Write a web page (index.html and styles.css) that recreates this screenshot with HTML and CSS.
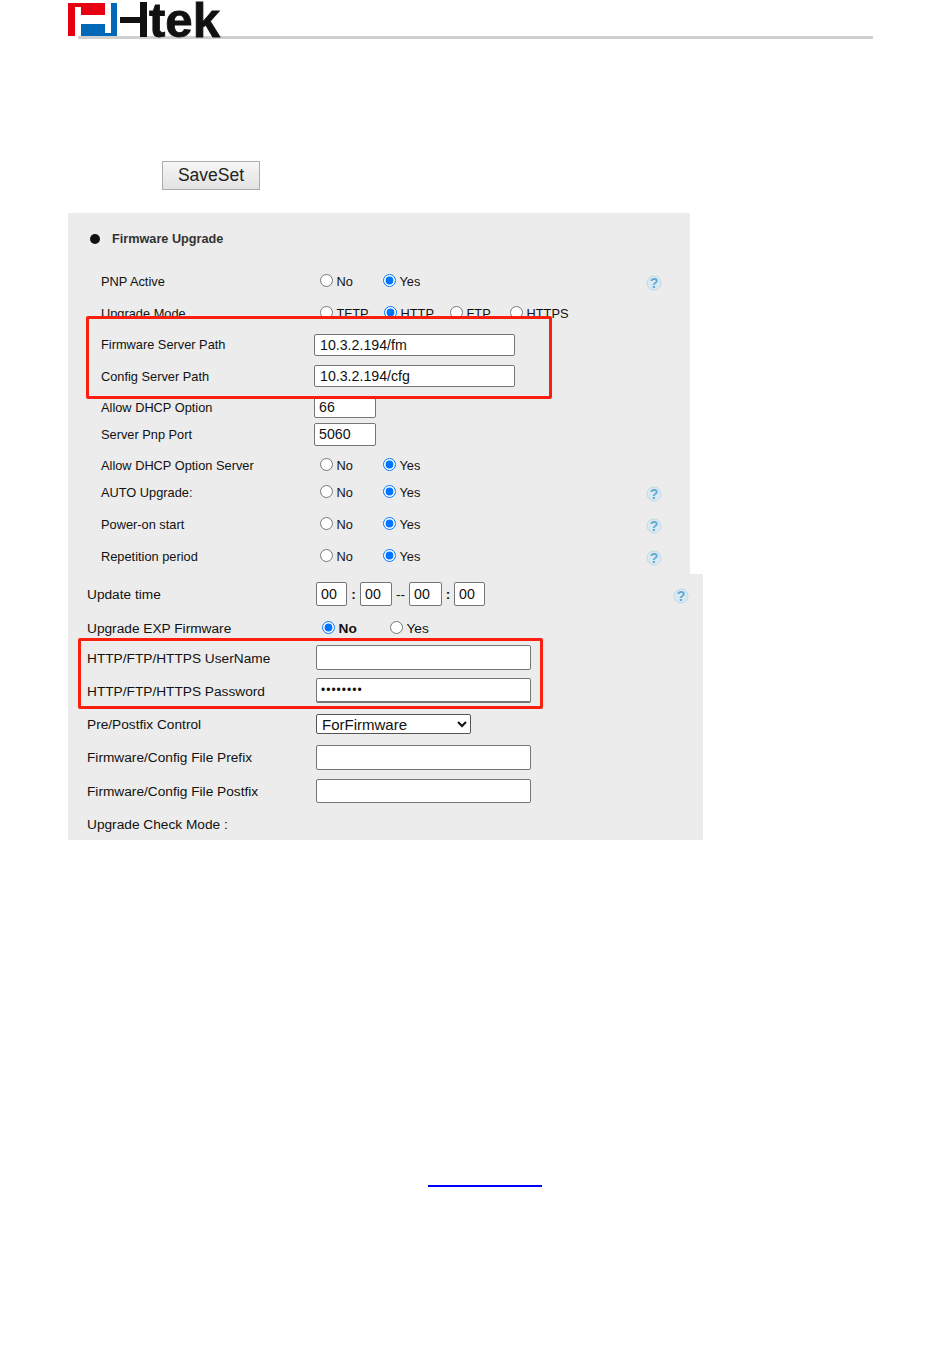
FILE: index.html
```html
<!DOCTYPE html>
<html lang="en">
<head>
<meta charset="utf-8">
<title>Firmware Upgrade</title>
<link rel="stylesheet" href="styles.css">
</head>
<body>
<header class="hdr">
  <svg class="logo" width="156" height="38" viewBox="0 0 156 38">
    <path fill="#e60012" d="M0 3H37V15H13V7H7V36H0Z"/>
    <path fill="#0068b7" d="M13 24H37V33H43V3H49V36H13Z"/>
    <path fill="#111" d="M52 17H72V2H79V37H72V23H52Z"/>
    <text class="logo-text" x="81" y="36.5" textLength="71" lengthAdjust="spacingAndGlyphs">tek</text>
  </svg>
</header>
<button class="save" type="button">SaveSet</button>

<section class="panel p1">
  <div class="head"><span class="dot"></span><span>Firmware Upgrade</span></div>
  <div class="row g19"><label>PNP Active</label><div class="ctl"><span class="opt w63"><input type="radio" name="a"><span>No</span></span><span class="opt"><input type="radio" name="a" checked><span>Yes</span></span></div><svg class="help" viewBox="0 0 16 16"><circle cx="8" cy="8" r="7" fill="#dbe9f1" stroke="#bcd9ea"/><text class="q-text" x="8" y="13" text-anchor="middle">?</text></svg></div>
  <div class="row g8"><label>Upgrade Mode</label><div class="ctl"><span class="opt w64"><input type="radio" name="b"><span>TFTP</span></span><span class="opt w66"><input type="radio" name="b" checked><span>HTTP</span></span><span class="opt w60"><input type="radio" name="b"><span>FTP</span></span><span class="opt"><input type="radio" name="b"><span>HTTPS</span></span></div></div>
  <div class="mark m1">
    <div class="row"><label>Firmware Server Path</label><div class="ctl"><input class="txt t200 down" type="text" value="10.3.2.194/fm"></div></div>
    <div class="row g8"><label>Config Server Path</label><div class="ctl"><input class="txt t200" type="text" value="10.3.2.194/cfg"></div></div>
  </div>
  <div class="row after1"><label>Allow DHCP Option</label><div class="ctl"><input class="txt t62" type="text" value="66"></div></div>
  <div class="row g3"><label>Server Pnp Port</label><div class="ctl"><input class="txt t62 tall" type="text" value="5060"></div></div>
  <div class="row g7"><label>Allow DHCP Option Server</label><div class="ctl"><span class="opt w63"><input type="radio" name="c"><span>No</span></span><span class="opt"><input type="radio" name="c" checked><span>Yes</span></span></div></div>
  <div class="row g3"><label>AUTO Upgrade:</label><div class="ctl"><span class="opt w63"><input type="radio" name="d"><span>No</span></span><span class="opt"><input type="radio" name="d" checked><span>Yes</span></span></div><svg class="help" viewBox="0 0 16 16"><circle cx="8" cy="8" r="7" fill="#dbe9f1" stroke="#bcd9ea"/><text class="q-text" x="8" y="13" text-anchor="middle">?</text></svg></div>
  <div class="row g8"><label>Power-on start</label><div class="ctl"><span class="opt w63"><input type="radio" name="e"><span>No</span></span><span class="opt"><input type="radio" name="e" checked><span>Yes</span></span></div><svg class="help" viewBox="0 0 16 16"><circle cx="8" cy="8" r="7" fill="#dbe9f1" stroke="#bcd9ea"/><text class="q-text" x="8" y="13" text-anchor="middle">?</text></svg></div>
  <div class="row g8"><label>Repetition period</label><div class="ctl"><span class="opt w63"><input type="radio" name="f"><span>No</span></span><span class="opt"><input type="radio" name="f" checked><span>Yes</span></span></div><svg class="help" viewBox="0 0 16 16"><circle cx="8" cy="8" r="7" fill="#dbe9f1" stroke="#bcd9ea"/><text class="q-text" x="8" y="13" text-anchor="middle">?</text></svg></div>
</section>

<section class="panel p2">
  <div class="row"><label>Update time</label><div class="ctl time"><input class="txt tm" type="text" value="00"><b>:</b><input class="txt tm tm2" type="text" value="00"><span class="dash">--</span><input class="txt tm tm3" type="text" value="00"><b class="c2">:</b><input class="txt tm" type="text" value="00"></div><svg class="help" viewBox="0 0 16 16"><circle cx="8" cy="8" r="7" fill="#dbe9f1" stroke="#bcd9ea"/><text class="q-text" x="8" y="13" text-anchor="middle">?</text></svg></div>
  <div class="row g10"><label>Upgrade EXP Firmware</label><div class="ctl"><span class="opt w68"><input type="radio" name="g" checked><span class="strong">No</span></span><span class="opt"><input type="radio" name="g"><span>Yes</span></span></div></div>
  <div class="mark m2">
    <div class="row"><label>HTTP/FTP/HTTPS UserName</label><div class="ctl"><input class="txt t215 h25 up" type="text"></div></div>
    <div class="row g9"><label>HTTP/FTP/HTTPS Password</label><div class="ctl"><input class="txt t215 h25 up pw" type="password" value="12345678"></div></div>
  </div>
  <div class="row g3"><label>Pre/Postfix Control</label><div class="ctl"><select class="sel"><option>ForFirmware</option></select></div></div>
  <div class="row g9"><label>Firmware/Config File Prefix</label><div class="ctl"><input class="txt t215 h25" type="text"></div></div>
  <div class="row g10"><label>Firmware/Config File Postfix</label><div class="ctl"><input class="txt t215" type="text"></div></div>
  <div class="row g9"><label>Upgrade Check Mode :</label></div>
</section>

<a class="link" href="#" aria-label="link"></a>
</body>
</html>
```
FILE: styles.css
```css
* { box-sizing: border-box; }
html, body { margin: 0; padding: 0; background: #fff; }
body {
  width: 950px;
  height: 1369px;
  overflow: hidden;
  font-family: "Liberation Sans", Arial, sans-serif;
  color: #111;
}
.hdr {
  display: flex;
  margin-left: 78px;
  width: 795px;
  height: 39px;
  border-bottom: 3px solid #d0d0d0;
}
.logo { flex: none; margin-left: -10px; overflow: visible; }
.logo-text {
  font: bold 48px "Liberation Sans", Arial, sans-serif;
  fill: #111;
  stroke: #111;
  stroke-width: .8px;
}
.save {
  display: block;
  margin: 122px 0 0 162px;
  width: 98px;
  height: 29px;
  padding: 0;
  border: 1px solid #adadad;
  background: linear-gradient(#f6f6f6, #e2e2e2);
  font: 17.5px "Liberation Sans", Arial, sans-serif;
  color: #222;
}
.panel { margin-left: 68px; background: #ececec; font-size: 12.8px; }
.p1 { width: 622px; margin-top: 23px; padding: 13px 0 6px 33px; }
.p2 { width: 635px; padding: 8px 0 4px 19px; font-size: 13.7px; }
.head {
  display: flex;
  align-items: center;
  height: 24px;
  margin-left: -11px;
  padding-top: 1px;
  font-weight: bold;
  font-size: 12.7px;
  color: #333;
}
.dot { width: 10px; height: 10px; margin-right: 12px; border-radius: 50%; background: #111; }
.row { display: grid; align-items: center; height: 24px; }
.p1 .row { grid-template-columns: 213px 333px 16px; }
.p2 .row { grid-template-columns: 229px 358px 16px; }
.ctl { display: flex; align-items: center; }
.opt { display: flex; align-items: center; }
.opt input { width: 13px; height: 13px; margin: -2px 3.5px 0 0; accent-color: #0075ff; }
.ctl > .opt:first-child { margin-left: 6px; }
.w60 { width: 60px; } .w63 { width: 63px; } .w64 { width: 64px; }
.w66 { width: 66px; } .w68 { width: 68px; }
.strong { font-weight: bold; }
.g3 { margin-top: 3px; } .g7 { margin-top: 7px; } .g8 { margin-top: 8px; }
.g9 { margin-top: 9px; } .g10 { margin-top: 10px; } .g19 { margin-top: 19px; }
.after1 { margin-top: -4px; }
.txt {
  display: block;
  height: 22px;
  padding: 0 5px;
  border: 1px solid #767676;
  border-radius: 2px;
  background: #fff;
  font: 14.2px "Liberation Sans", Arial, sans-serif;
  color: #111;
}
.t200 { width: 201px; } .t62 { width: 62px; padding: 0 4px; } .tall { height: 23px; }
.down { margin-top: 2px; }
.up { margin-top: -1px; }
.t215 { width: 215px; height: 24px; } .h25 { height: 25px; }
.tm { width: 31px; height: 24px; padding: 0 4px; }
.tm2 { width: 32px; } .tm3 { width: 33px; }
.time b { width: 13px; text-align: center; }
.time .c2 { width: 12px; }
.dash { width: 17px; text-align: center; }
.pw { font-size: 12px; letter-spacing: 1px; padding-left: 4px; border-bottom-width: 2px; }
.sel {
  display: block;
  width: 155px;
  height: 20px;
  padding: 0 0 0 1px;
  border: 1px solid #555;
  border-radius: 2px;
  background: #fff;
  font: 15px "Liberation Sans", Arial, sans-serif;
  color: #111;
}
.help { width: 16px; height: 16px; margin: 3px 0 0 -1px; }
.q-text { font: bold 14px "Liberation Sans", Arial, sans-serif; fill: #5fa8d3; }
.mark {
  position: relative;
  z-index: 1;
  border: 3px solid #fb1f10;
  border-radius: 2px;
  background: #ececec;
}
.m1 { width: 466px; margin: -9px 0 0 -15px; padding: 13px 0 8px 12px; }
.m2 { width: 465px; margin: -2px 0 0 -9px; padding: 5px 0 3px 6px; }
.link {
  display: block;
  width: 114px;
  margin: 345px 0 0 428px;
  border-bottom: 2px solid #0000ff;
}
```
